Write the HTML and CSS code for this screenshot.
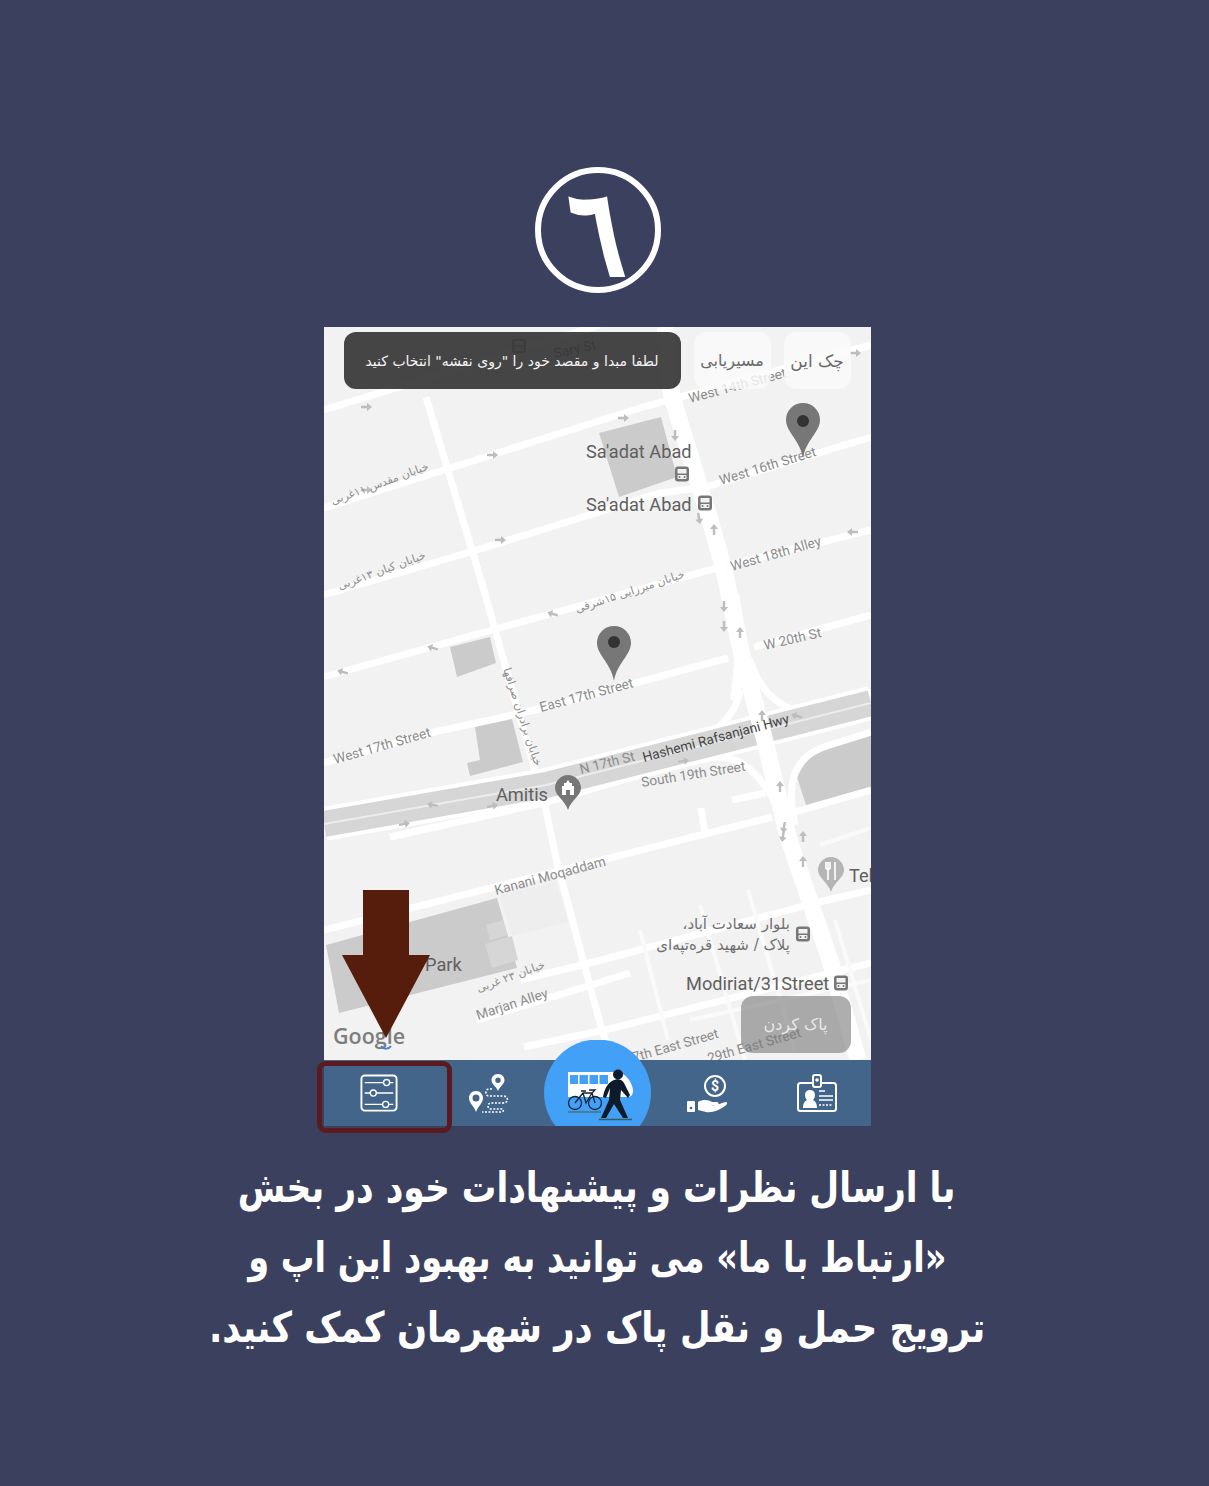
FILE: index.html
```html
<!DOCTYPE html>
<html lang="fa">
  <head>
    <meta charset="UTF-8" />
    <meta name="viewport" content="width=device-width, initial-scale=1.0" />
    <title>راهنمای برنامه</title>
    <link rel="stylesheet" href="styles.css">
  </head>
  <body>
    <main class="poster">
      <div class="badge"><span class="badge-num">٦</span></div>

      <section class="phone">
        <!-- map uses page coordinates through the viewBox -->
        <svg class="map" viewBox="324 327 547 733" width="547" height="733">
          <defs>
            <path id="arw" d="M-5 -1.2H1V-4L6 0L1 4V1.2H-5Z" />
            <g id="bus">
              <rect x="-7" y="-7.5" width="14" height="15" rx="3" fill="#777" />
              <rect x="-4.5" y="-5" width="9" height="4.500" fill="#f2f2f2" />
              <rect x="-4.5" y="1" width="9" height="4" rx="1" fill="#f2f2f2" />
              <circle cx="-2.500" cy="3" r="1" fill="#777" />
              <circle cx="2.500" cy="3" r="1" fill="#777" />
            </g>
            <path id="pin" d="M0 -19C-9.5 -19 -17 -11.5 -17 -2C-17 10 -3 18 0 36C3 18 17 10 17 -2C17 -11.5 9.5 -19 0 -19Z" />
          </defs>

          <rect x="324" y="327" width="547" height="733" fill="#f2f2f2" />

          <!-- blocks -->
          <g class="block">
            <polygon points="599,433 661,417 677,477 619,497" />
            <polygon points="450,647 490,637 496,663 457,677" />
            <polygon points="475,727 512,719 523,762 470,776 467,763 480,760" />
            <polygon points="812,750 871,730 871,787 806,805 797,777" />
            <polygon points="326,945 497,898 517,968 339,1013" />
          </g>
          <g class="block-soft">
            <polygon points="486,925 503,920 508,935 490,940" />
            <polygon points="485,944 512,936 518,960 492,968" />
          </g>
          <polygon class="block-faint" points="500,895 556,882 568,922 512,936" />

          <!-- streets -->
          <g class="road">
            <path d="M324 410L600 325" />
            <path d="M324 508L643 407L871 345" />
            <path d="M324 595L477 550L660 493L706 487L871 437" />
            <path d="M324 677L492 630L710 570L871 530" />
            <path d="M324 763L430 733L535 710L728 658M754 647L871 615" />
            <path d="M324 930L772 817" />
            <path d="M520 980L590 963L815 903L871 890" />
            <path d="M477 1020L630 973" />
            <path d="M524 1047L605 1030L871 963" />
            <path d="M426 397L481 580L546 810L557 863L601 1027L612 1060" />
            <path d="M732 800L765 793M701 808L705 833" />
            <path d="M390 837L543 803L692 760C725 752 752 755 779 810" />
            <path d="M750 660C760 690 775 705 800 712L871 692" />
            <path d="M740 690C735 725 700 745 640 765" />
            <path d="M795 825C785 780 795 755 830 745L871 732" />
            <path d="M795 812L871 790" />
          </g>
          <g class="road-thin">
            <path d="M700 905L745 1060M748 890L795 1050" />
            <path d="M640 930L668 1040M820 845L871 828M835 920L871 1040" />
            <path d="M690 1020L871 980" />
          </g>
          <path class="hw-edge" d="M324 824L546 785L871 703" />
          <path class="highway" d="M324 824L546 785L871 703" />
          <path class="hw-mid" d="M324 824L546 785L871 703" />
          <path class="main-road" d="M665 327L672 397L710 520L724 570L743 660L764 737L788 837L830 960L858 1060" />
          <path class="main-side" d="M734 595L742 640L735 700" />

          <!-- one way arrows -->
          <g class="arrows">
            <use href="#arw" x="366" y="407" /><use href="#arw" x="623" y="418" />
            <use href="#arw" x="492" y="455" /><use href="#arw" x="500" y="540" />
            <use href="#arw" x="855" y="353" /><use href="#arw" x="366" y="490" />
            <use href="#arw" transform="translate(853 532) rotate(180)" />
            <use href="#arw" transform="translate(553 614) rotate(195)" />
            <use href="#arw" transform="translate(433 648) rotate(195)" />
            <use href="#arw" transform="translate(343 672) rotate(195)" />
            <use href="#arw" transform="translate(433 805) rotate(190)" />
            <use href="#arw" transform="translate(797 716) rotate(195)" />
            <use href="#arw" transform="translate(492 806) rotate(-10)" />
            <use href="#arw" transform="translate(404 824) rotate(-10)" />
            <use href="#arw" transform="translate(683 761) rotate(-10)" />
            <use href="#arw" transform="translate(675 435) rotate(90)" />
            <use href="#arw" transform="translate(699 518) rotate(80)" />
            <use href="#arw" transform="translate(724 606) rotate(90)" />
            <use href="#arw" transform="translate(724 626) rotate(90)" />
            <use href="#arw" transform="translate(714 530) rotate(-90)" />
            <use href="#arw" transform="translate(740 633) rotate(-90)" />
            <use href="#arw" transform="translate(762 716) rotate(-90)" />
            <use href="#arw" transform="translate(780 787) rotate(-90)" />
            <use href="#arw" transform="translate(803 837) rotate(-90)" />
            <use href="#arw" transform="translate(803 862) rotate(-90)" />
            <use href="#arw" transform="translate(784 827) rotate(100)" />
            <use href="#arw" transform="translate(783 836) rotate(100)" />
          </g>

          <!-- labels -->
          <g class="st">
            <text transform="translate(690 403) rotate(-15)">West 14th Street</text>
            <text transform="translate(721 485) rotate(-17)">West 16th Street</text>
            <text transform="translate(732 571) rotate(-16)">West 18th Alley</text>
            <text transform="translate(765 650) rotate(-13)">W 20th St</text>
            <text transform="translate(541 712) rotate(-15)">East 17th Street</text>
            <text transform="translate(335 764) rotate(-16)">West 17th Street</text>
            <text transform="translate(581 774) rotate(-14)">N 17th St</text>
            <text transform="translate(642 787) rotate(-9)">South 19th Street</text>
            <text transform="translate(496 895) rotate(-15)">Kanani Moqaddam</text>
            <text transform="translate(478 1020) rotate(-18)">Marjan Alley</text>
            <text transform="translate(634 1062) rotate(-16)">7th East Street</text>
            <text transform="translate(709 1063) rotate(-16)">29th East Street</text>
            <text class="st-dark" transform="translate(644 762) rotate(-15)">Hashemi Rafsanjani Hwy</text>
            <text class="st-dark" transform="translate(555 358) rotate(-12)">Sary St</text>
          </g>
          <g class="st-fa">
            <text transform="translate(381 487) rotate(-20)">خیابان مقدس ۱۱غربی</text>
            <text transform="translate(383 574) rotate(-20)">خیابان کیان ۱۳غربی</text>
            <text transform="translate(631 595) rotate(-18)">خیابان میرزایی ۱۵شرقی</text>
            <text transform="translate(519 718) rotate(72)">خیابان برادران صرافها</text>
            <text transform="translate(512 980) rotate(-20)">خیابان ۲۳ غربی</text>
          </g>
          <g class="place">
            <text x="586" y="458">Sa'adat Abad</text>
            <text x="586" y="511">Sa'adat Abad</text>
            <text x="496" y="801">Amitis</text>
            <text x="425" y="971">Park</text>
            <text x="686" y="990">Modiriat/31Street</text>
            <text x="849" y="882">Tel</text>
          </g>
          <g class="place-fa">
            <text x="790" y="929">بلوار سعادت آباد،</text>
            <text x="790" y="950">پلاک / شهید قره‌تپه‌ای</text>
          </g>

          <use href="#bus" x="682" y="474" /><use href="#bus" x="705" y="503" />
          <use href="#bus" x="803" y="934" /><use href="#bus" x="841" y="983" />
          <use href="#bus" x="519" y="346" />

          <!-- pins -->
          <use href="#pin" class="pin" x="803" y="422" />
          <circle cx="803" cy="421" r="6" fill="#333" />
          <use href="#pin" class="pin" x="614" y="645" />
          <circle cx="614" cy="642" r="6" fill="#333" />
          <path class="pin" d="M568 775C561 775 555 781 555 788C555 796 565 800 568 810C571 800 581 796 581 788C581 781 575 775 568 775Z" />
          <path d="M568 780L570 783H572V786H574V795H562V786H564V783H566Z" fill="#fff" />
          <rect x="566" y="790" width="4" height="5" fill="#777" />
          <path d="M831 857C824 857 818 863 818 870C818 878 828 882 831 892C834 882 844 878 844 870C844 863 838 857 831 857Z" fill="#b5b5b5" />
          <path d="M826 862V869M828 862V880M830 862V869M826 869H830M835 862V880" stroke="#fff" stroke-width="1.6" fill="none" />

          <text class="google" x="333" y="1044">Google</text>
          <path d="M381 1046C384 1050 389 1049 391 1046" stroke="#4a80d0" stroke-width="2" fill="none" />
        </svg>

        <div class="map-tools">
          <div class="toast">لطفا مبدا و مقصد خود را "روی نقشه" انتخاب کنید</div>
          <button class="tool-btn tool-route">مسیریابی</button>
          <button class="tool-btn tool-check">چک این</button>
        </div>
        <button class="clear-btn">پاک کردن</button>

        <nav class="tabbar">
          <a class="tab">
            <svg class="tab-icon" viewBox="0 0 40 40" width="38" height="38">
              <rect x="1.5" y="1.5" width="37" height="37" rx="3.5" class="ic" />
              <path d="M5 9H25M31 9H35M5 20H11M17 20H35M5 32H24M30 32H35" class="ic-thin" />
              <circle cx="28" cy="9" r="3.2" class="ic-thin" />
              <circle cx="14" cy="20" r="3.2" class="ic-thin" />
              <circle cx="27" cy="32" r="3.2" class="ic-thin" />
            </svg>
          </a>
          <a class="tab">
            <svg class="tab-icon" viewBox="0 0 42 42" width="42" height="42">
              <path d="M30 2C26 2 23.500 5 23.500 8C23.500 12 28 14 30 19C32 14 36.500 12 36.500 8C36.500 5 34 2 30 2ZM30 5.500A2.700 2.700 0 1 1 30 10.900A2.700 2.700 0 0 1 30 5.500Z" class="ic-fill" fill-rule="evenodd" />
              <path d="M8 19C3.500 19 1 22.500 1 26C1 31 6 34 8 40C10 34 15 31 15 26C15 22.500 12.500 19 8 19ZM8 22.500A3.500 3.500 0 1 1 8 29.500A3.500 3.500 0 0 1 8 22.500Z" class="ic-fill" fill-rule="evenodd" />
              <path d="M24 17H21C17 17 17 24 21 24H35C41 24 41 31 35 31H23C19 31 19 37 23 37H34C36 37 36 40 33 40H14" class="ic-dash" />
            </svg>
          </a>
          <a class="tab tab-main">
            <svg viewBox="0 0 107 86" width="107" height="86">
              <circle cx="53.500" cy="53" r="53.500" fill="#42a0f7" />
              <path d="M24 32H72C81 32 88 42 89 50C89 55 87 57 84 57H24Z" fill="#fff" />
              <path d="M26 35H34V44H26ZM35.500 35H44V44H35.500ZM45.500 35H54V44H45.500ZM55.500 35H64V44H55.500Z" fill="#42a0f7" />
              <g fill="none" stroke="#10233a" stroke-width="1.300">
                <circle cx="31" cy="63" r="6.500" />
                <circle cx="51" cy="63" r="6.500" />
                <path d="M31 63L39 53H48L51 63M39 53L42 63L48 53M37 51H42M45 50H51L48 53" />
              </g>
              <path d="M24 72H57" stroke="#4a5a3a" stroke-width="1.200" />
              <circle cx="74" cy="34.500" r="5" fill="#0d1b2a" />
              <path d="M68 41C73 38 78 39 80 43L86 55L84 58L77 50L76 60L84 78H79L70 64L62 78H57L65 60L66 48L62 58L59 57C60 50 63 44 68 41Z" fill="#0d1b2a" />
              <path d="M55 79.500H88" stroke="#3a5a5a" stroke-width="1.600" />
            </svg>
          </a>
          <a class="tab">
            <svg class="tab-icon" viewBox="0 0 42 42" width="42" height="42">
              <circle cx="29" cy="14" r="10" class="ic" />
              <text x="29" y="19" class="ic-dollar">$</text>
              <rect x="1" y="29" width="8" height="11" rx="1" class="ic-fill" />
              <circle cx="5" cy="36" r="1.300" fill="#44658a" />
              <path d="M12 30C17 27 23 28 26 30H31C33 30 33 33 31 33H25C30 34 35 31 40 30C42 30 41 33 39 34C33 38 27 41 20 40L12 38Z" class="ic-fill" />
            </svg>
          </a>
          <a class="tab">
            <svg class="tab-icon" viewBox="0 -1 42 42" width="42" height="42">
              <rect x="2" y="10" width="38" height="28" rx="2.500" class="ic" />
              <rect x="17" y="2" width="8" height="12" rx="2" fill="#44658a" stroke="#fff" stroke-width="2" />
              <circle cx="21" cy="7" r="1.800" fill="#fff" />
              <path d="M7 35C7 30 9 28 11 27C8 24 8 17 14 17C20 17 20 24 17 27C19 28 21 30 21 35Z" class="ic-fill" />
              <path d="M23 18H29M23 23H37M23 27H37" class="ic-thin" />
              <path d="M23 32H37" class="ic-thin" stroke-dasharray="2 1.500" />
            </svg>
          </a>
        </nav>

        <div class="focus-box"></div>
        <svg class="down-arrow" width="88" height="148" viewBox="0 0 88 148">
          <path d="M21 0H67V65H88L44 148L0 65H21Z" fill="#561c0c" />
        </svg>
      </section>

      <p class="caption">
        <span class="cap-one">با ارسال نظرات و پیشنهادات خود در بخش</span>
        <span class="cap-two">«ارتباط با ما» می توانید به بهبود این اپ و</span>
        <span class="cap-three">ترویج حمل و نقل پاک در شهرمان کمک کنید.</span>
      </p>
    </main>
  </body>
</html>
```

FILE: styles.css
```css
html,
body {
  margin: 0;
  height: 100%;
  overflow: hidden;
}

body {
  background-color: #3c405f;
}

.poster {
  display: flex;
  flex-direction: column;
  align-items: center;
  padding: 167px 15px 0 0;
}

.badge {
  width: 126px;
  height: 126px;
  box-sizing: border-box;
  border: 6px solid #fff;
  border-radius: 50%;
  display: flex;
  align-items: center;
  justify-content: center;
  margin: 0 0 34px 2px;
}

.badge-num {
  font-family: "DejaVu Serif", "DejaVu Sans", serif;
  font-weight: 700;
  font-size: 96px;
  line-height: 1;
  color: #fff;
  transform: translate(-2px, 3px) scale(0.88, 1.32) skewX(12deg);
}

.phone {
  position: relative;
  width: 547px;
  height: 799px;
  background-color: #f2f2f2;
}

.map {
  display: block;
}

.block polygon {
  fill: #cbcbcb;
}

.block-soft polygon {
  fill: #d6d6d6;
}

.block-faint {
  fill: #eeeeee;
}

.road path {
  fill: none;
  stroke: #fff;
  stroke-width: 7;
}

.road-thin path {
  fill: none;
  stroke: #fafafa;
  stroke-width: 4;
}

.highway {
  fill: none;
  stroke: #d6d6d6;
  stroke-width: 26;
}

.hw-edge {
  fill: none;
  stroke: #fff;
  stroke-width: 34;
}

.hw-mid {
  fill: none;
  stroke: #ececec;
  stroke-width: 2;
}

.main-road {
  fill: none;
  stroke: #fff;
  stroke-width: 17;
}

.main-side {
  fill: none;
  stroke: #fff;
  stroke-width: 10;
}

.arrows use {
  fill: #bdbdbd;
}

.st text {
  font-family: Roboto, "Liberation Sans", sans-serif;
  font-size: 13.6px;
  fill: #8c8c8c;
}

.st .st-dark {
  fill: #444;
}

.st-fa text {
  font-family: "DejaVu Sans", sans-serif;
  font-size: 11.2px;
  fill: #8f8f8f;
  text-anchor: middle;
}

.place text {
  font-family: Roboto, "Liberation Sans", sans-serif;
  font-size: 18.2px;
  fill: #5f5f5f;
}

.place-fa text {
  font-family: "DejaVu Sans", sans-serif;
  font-size: 15px;
  fill: #707070;
  direction: rtl;
}

.pin {
  fill: #777;
}

.google {
  font-family: "Open Sans", Roboto, sans-serif;
  font-size: 21.5px;
  font-weight: 600;
  fill: #7d7d7d;
}

.map-tools {
  position: absolute;
  top: 5px;
  left: 20px;
  display: flex;
  font-family: "DejaVu Sans", sans-serif;
}

.toast {
  width: 337px;
  height: 57px;
  box-sizing: border-box;
  display: flex;
  align-items: center;
  justify-content: center;
  background-color: rgba(56, 56, 56, 0.93);
  border-radius: 12px;
  color: #f4f4f4;
  font-size: 14px;
  direction: rtl;
  margin-right: 13px;
}

.tool-btn {
  height: 57px;
  padding: 0;
  border: none;
  border-radius: 12px;
  background-color: rgba(250, 250, 250, 0.82);
  color: #6a6a6a;
  font-family: inherit;
  font-size: 16px;
}

.tool-route {
  width: 77px;
  margin-right: 13px;
}

.tool-check {
  width: 67px;
  font-size: 17px;
}

.clear-btn {
  position: absolute;
  top: 669px;
  left: 417px;
  width: 110px;
  height: 57px;
  padding: 0;
  border: none;
  border-radius: 12px;
  background-color: rgba(120, 120, 120, 0.6);
  color: #e8e8e8;
  font-family: "DejaVu Sans", sans-serif;
  font-size: 16px;
}

.tabbar {
  display: grid;
  grid-template-columns: repeat(5, 1fr);
  height: 66px;
  background-color: #44658a;
}

.tab {
  display: flex;
  align-items: center;
  justify-content: center;
  padding-left: 2px;
}

.tab-main {
  align-items: flex-end;
  overflow: hidden;
  margin-top: -20px;
  height: 86px;
}

.tab-icon {
  display: block;
}

.ic,
.ic-thin,
.ic-dash {
  fill: none;
  stroke: #fff;
}

.ic {
  stroke-width: 2;
}

.ic-thin {
  stroke-width: 1.4;
}

.ic-dash {
  stroke-width: 1.6;
  stroke-dasharray: 2 1.5;
}

.ic-fill {
  fill: #fff;
}

.ic-dollar {
  font-family: Roboto, sans-serif;
  font-size: 14px;
  font-weight: 700;
  fill: #fff;
  text-anchor: middle;
}

.focus-box {
  position: absolute;
  left: -7px;
  top: 734px;
  width: 135px;
  height: 72px;
  box-sizing: border-box;
  border: 5px solid #5a1a1e;
  border-radius: 9px;
}

.down-arrow {
  position: absolute;
  left: 18px;
  top: 563px;
}

.caption {
  display: flex;
  flex-direction: column;
  align-items: center;
  margin: 27px 0 0;
  font-family: "DejaVu Sans", sans-serif;
  font-weight: 700;
  font-size: 42px;
  line-height: 70px;
  color: #fff;
  direction: rtl;
  white-space: nowrap;
}

.cap-one {
  transform: scaleX(0.82);
}

.cap-two {
  transform: scaleX(0.8);
}

.cap-three {
  transform: scaleX(0.84);
}
```
